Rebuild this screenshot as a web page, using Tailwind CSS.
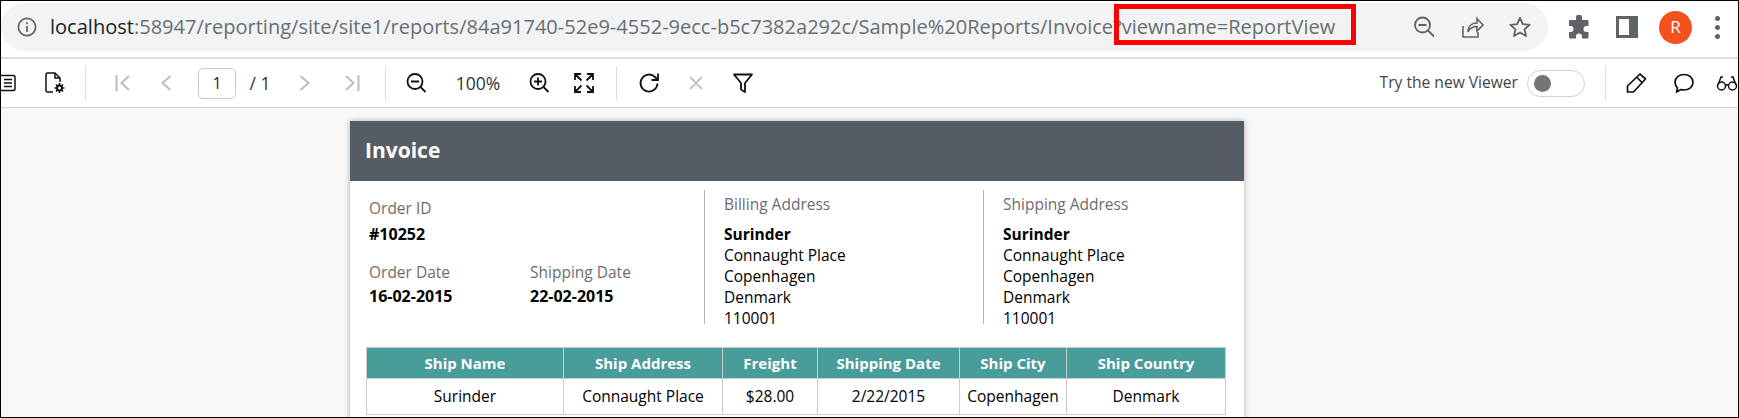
<!DOCTYPE html>
<html lang="en">
<head>
<meta charset="UTF-8" />
<title>Invoice - Report Viewer</title>
<script src="https://cdn.jsdelivr.net/npm/@tailwindcss/browser@4"></script>
</head>
<body class="bg-white">
<div class="relative w-[1739px] h-[418px] overflow-hidden border border-black bg-white font-['Open_Sans',sans-serif] flex flex-col box-border">

  <!-- browser bar -->
  <div class="flex items-center pt-[2px] pb-[6px] shrink-0 border-b-2 border-[#dadcdf] box-content h-[48px]">
    <div class="flex items-center w-[1547px] h-[48px] bg-[#f1f3f4] rounded-[24px] shrink-0">
      <svg class="ml-[15px] shrink-0" width="22" height="22" viewBox="0 0 22 22" fill="none" stroke="#5f6368" stroke-width="1.7"><circle cx="11" cy="11" r="8.6"/><path d="M11 10v6M11 6.2v2"/></svg>
      <div class="ml-[12px] w-[1330px] text-[20.05px] text-[#6a6e72] whitespace-nowrap overflow-hidden"><span class="text-[#202124]">localhost</span>:58947/reporting/site/site1/reports/84a91740-52e9-4552-9ecc-b5c7382a292c/Sample%20Reports/Invoice?viewname=ReportView</div>
      <svg class="ml-[32px] shrink-0" width="24" height="24" viewBox="0 0 24 24" fill="none" stroke="#5f6368" stroke-width="1.8"><circle cx="10.5" cy="10" r="7.5"/><path d="M6.5 10h8M16 15.5l6 6"/></svg>
      <svg class="ml-[24px] shrink-0" width="24" height="24" viewBox="0 0 24 24" fill="none" stroke="#5f6368" stroke-width="1.6"><path d="M3 11v11h15v-5"/><path d="M8 17c0-6 4-9 9-9V3.5l6 6.5-6 6v-4.500c-4 0-7 1.500-9 5.500z"/></svg>
      <svg class="ml-[24px] shrink-0" width="24" height="24" viewBox="0 0 24 24" fill="none" stroke="#5f6368" stroke-width="1.8"><path d="M12 2.800l2.800 6.300 6.800.7-5.100 4.500 1.500 6.700-6-3.500-6 3.500 1.500-6.700-5.100-4.500 6.800-.7z" stroke-linejoin="round"/></svg>
    </div>
    <svg class="ml-[19px] shrink-0" width="24" height="24" viewBox="0 0 24 24" fill="#5f6368"><path d="M9 2.500a3 3 0 0 1 6 0V5h5.500a1 1 0 0 1 1 1v5h-2a3 3 0 0 0 0 6h2v5.500a1 1 0 0 1-1 1H15v-2a3 3 0 0 0-6 0v2H3a1 1 0 0 1-1-1V17h1.500a3 3 0 0 0 0-6H2V6a1 1 0 0 1 1-1h6z"/></svg>
    <svg class="ml-[25px] shrink-0" width="22" height="22" viewBox="0 0 22 22" fill="#5f6368"><path fill-rule="evenodd" d="M0 0h22v22H0zM3 3v16h10V3z"/></svg>
    <div class="ml-[21px] w-[33px] h-[33px] shrink-0 rounded-full bg-[#f4511e] flex items-center justify-center text-[17px] text-white">R</div>
    <div class="ml-[23px] flex flex-col gap-[4px] shrink-0">
      <span class="w-[5px] h-[5px] rounded-full bg-[#5f6368]"></span>
      <span class="w-[5px] h-[5px] rounded-full bg-[#5f6368]"></span>
      <span class="w-[5px] h-[5px] rounded-full bg-[#5f6368]"></span>
    </div>
  </div>

  <!-- viewer toolbar -->
  <div class="flex items-center h-[48px] shrink-0 border-b border-[#cfcfcf] box-content text-[#1f1f1f]">
    <div class="w-[31px] shrink-0 overflow-hidden">
      <svg class="-ml-[4px]" width="20" height="20" viewBox="0 0 20 20" fill="none" stroke="#111" stroke-width="1.500"><rect x="3" y="2.500" width="15" height="15" rx="1.500"/><path d="M7 6.500h8M7 10h8M7 13.500h8"/></svg>
    </div>
    <div class="w-[46px] shrink-0 flex justify-center">
      <svg width="22" height="24" viewBox="0 0 22 24" fill="none" stroke="#111" stroke-width="1.500"><path d="M9 21H3.500a1.500 1.500 0 0 1-1.500-1.500v-16A1.500 1.500 0 0 1 3.500 2H11l5 5v4"/><path d="M11 2v5h5"/><circle cx="15.500" cy="17" r="2.500" stroke-width="2"/><path d="M15.500 12v2M15.500 20v2M10.500 17h2M18.500 17h2M12 13.500l1.500 1.500M17.500 19l1.500 1.500M19 13.500L17.500 15M13.500 19L12 20.500" stroke-width="1.600"/></svg>
    </div>
    <div class="ml-[7px] w-px h-[34px] bg-[#dedede] shrink-0"></div>

    <div class="ml-[14px] w-[46px] shrink-0 flex justify-center">
      <svg width="18" height="20" viewBox="0 0 18 20" fill="none" stroke="#bdbdbd" stroke-width="2"><path d="M2.500 2v16M15 3L7.500 10 15 17"/></svg>
    </div>
    <div class="w-[40px] shrink-0 flex justify-center">
      <svg width="14" height="20" viewBox="0 0 14 20" fill="none" stroke="#bdbdbd" stroke-width="2"><path d="M11.500 3L3.500 10l8 7"/></svg>
    </div>
    <div class="ml-[12px] w-[38px] h-[31px] shrink-0 border border-[#c9c9c9] rounded-[5px] flex items-center justify-center text-[16px]">1</div>
    <div class="w-[48px] shrink-0 text-center text-[17.500px] text-[#333]">/ 1</div>
    <div class="w-[42px] shrink-0 flex justify-center">
      <svg width="14" height="20" viewBox="0 0 14 20" fill="none" stroke="#bdbdbd" stroke-width="2"><path d="M2.500 3l8 7-8 7"/></svg>
    </div>
    <div class="w-[52px] shrink-0 flex justify-center">
      <svg width="18" height="20" viewBox="0 0 18 20" fill="none" stroke="#bdbdbd" stroke-width="2"><path d="M15.500 2v16M3 3l7.500 7L3 17"/></svg>
    </div>
    <div class="ml-[7px] w-px h-[34px] bg-[#dedede] shrink-0"></div>

    <div class="w-[60px] shrink-0 flex justify-center">
      <svg width="22" height="22" viewBox="0 0 22 22" fill="none" stroke="#111" stroke-width="1.800"><circle cx="10" cy="9.500" r="7.500"/><path d="M6 9.500h8M15.500 15l5 5"/></svg>
    </div>
    <div class="w-[64px] shrink-0 text-center text-[17.500px] text-[#333]">100%</div>
    <div class="w-[58px] shrink-0 flex justify-center">
      <svg width="22" height="22" viewBox="0 0 22 22" fill="none" stroke="#111" stroke-width="1.800"><circle cx="10" cy="9.500" r="7.500"/><path d="M6 9.500h8M10 5.500v8M15.500 15l5 5"/></svg>
    </div>
    <div class="w-[32px] shrink-0 flex justify-center">
      <svg width="22" height="22" viewBox="0 0 22 22" fill="none" stroke="#111" stroke-width="1.800"><path d="M2 8V2h6M2 2l6.500 6.500M14 2h6v6M20 2l-6.500 6.500M2 14v6h6M2 20l6.500-6.500M20 14v6h-6M20 20l-6.500-6.500"/></svg>
    </div>
    <div class="ml-[16px] w-px h-[34px] bg-[#dedede] shrink-0"></div>

    <div class="w-[64px] shrink-0 flex justify-center">
      <svg width="24" height="24" viewBox="0 0 24 24" fill="none" stroke="#111" stroke-width="1.800"><path d="M20.500 12.500a8.500 8.500 0 1 1-2.500-6.500l2.500 2.500"/><path d="M21 2.500v6.500h-6.500"/></svg>
    </div>
    <div class="w-[30px] shrink-0 flex justify-center">
      <svg width="18" height="18" viewBox="0 0 18 18" fill="none" stroke="#c4c4c4" stroke-width="2"><path d="M3 3l12 12M15 3L3 15"/></svg>
    </div>
    <div class="w-[64px] shrink-0 flex justify-center">
      <svg width="22" height="22" viewBox="0 0 22 22" fill="none" stroke="#111" stroke-width="1.800" stroke-linejoin="round"><path d="M2 2.500h18l-7 8.500v9l-4-2.500V11z"/></svg>
    </div>

    <div class="ml-auto shrink-0 text-[15.600px] text-[#444] whitespace-nowrap">Try the new Viewer</div>
    <div class="ml-[9px] w-[58px] h-[27px] shrink-0 rounded-full border border-[#cfcfcf] flex items-center pl-[6px]">
      <span class="w-[17px] h-[17px] rounded-full bg-[#757575]"></span>
    </div>
    <div class="ml-[20px] w-px h-[34px] bg-[#dedede] shrink-0"></div>
    <div class="w-[60px] shrink-0 flex justify-center">
      <svg width="22" height="22" viewBox="0 0 22 22" fill="none" stroke="#111" stroke-width="1.700" stroke-linejoin="round"><path d="M15 2l5.500 5-12 13H2.500v-6z"/><path d="M12 5.500l5.500 5.500"/></svg>
    </div>
    <div class="w-[36px] shrink-0 flex justify-center">
      <svg class="shrink-0" width="22" height="22" viewBox="0 0 22 22" fill="none" stroke="#111" stroke-width="1.700" stroke-linejoin="round"><path d="M11 2.500c5 0 9 3.300 9 7.800s-4 7.700-9 7.700c-1 0-2-.1-3-.5L3.500 20l1-4C3 14.500 2 12.500 2 10.300 2 5.800 6 2.500 11 2.500z"/></svg>
    </div>
    <div class="w-[36px] shrink-0 overflow-hidden">
      <svg class="ml-[14px]" width="22" height="20" viewBox="0 0 22 20" fill="none" stroke="#111" stroke-width="1.500"><circle cx="5.500" cy="13" r="4"/><circle cx="16.500" cy="13" r="4"/><path d="M9.500 12.500c1-1 2-1 3 0M2 12l3-8h2M20 12l-3-8h-2"/></svg>
    </div>
  </div>

  <!-- report page -->
  <div class="flex-1 min-h-0 bg-[#f8f8f8] overflow-hidden pt-[13px] pl-[349px]">
    <div class="w-[894px] h-[320px] bg-white shadow-[0_0_6px_rgba(0,0,0,0.3)]">
      <div class="h-[60px] bg-[#555c63] flex items-center pl-[15px] text-[21px] font-bold text-white">Invoice</div>

      <div class="flex h-[134px] mt-[9px]">
        <div class="w-[355px] pl-[19px] pt-[8px] shrink-0 border-r border-[#b5b5b5] text-[15.500px] leading-[20px]">
          <div class="text-[#6d6d6d]">Order ID</div>
          <div class="mt-[6px] font-bold text-black text-[16px]">#10252</div>
          <div class="flex mt-[18px]">
            <div class="w-[161px]">
              <div class="text-[#6d6d6d]">Order Date</div>
              <div class="mt-[4px] font-bold text-black text-[16px]">16-02-2015</div>
            </div>
            <div>
              <div class="text-[#6d6d6d]">Shipping Date</div>
              <div class="mt-[4px] font-bold text-black text-[16px]">22-02-2015</div>
            </div>
          </div>
        </div>
        <div class="w-[279px] pl-[19px] pt-[4px] shrink-0 border-r border-[#b5b5b5] text-[15.500px] leading-[21px] text-black">
          <div class="text-[#6d6d6d] mb-[9px]">Billing Address</div>
          <div class="font-bold">Surinder</div>
          <div>Connaught Place</div>
          <div>Copenhagen</div>
          <div>Denmark</div>
          <div>110001</div>
        </div>
        <div class="pl-[19px] pt-[4px] text-[15.500px] leading-[21px] text-black">
          <div class="text-[#6d6d6d] mb-[9px]">Shipping Address</div>
          <div class="font-bold">Surinder</div>
          <div>Connaught Place</div>
          <div>Copenhagen</div>
          <div>Denmark</div>
          <div>110001</div>
        </div>
      </div>

      <table class="ml-[16px] mt-[23px] w-[859px] table-fixed border-collapse text-center text-[15.500px]">
        <colgroup>
          <col class="w-[197px]" /><col class="w-[159px]" /><col class="w-[95px]" /><col class="w-[142px]" /><col class="w-[107px]" /><col class="w-[159px]" />
        </colgroup>
        <thead>
          <tr class="h-[31px] bg-[#489c9a] text-white font-bold text-[15px]">
            <th class="border border-[#cccccc] p-0">Ship Name</th>
            <th class="border border-[#cccccc] p-0">Ship Address</th>
            <th class="border border-[#cccccc] p-0">Freight</th>
            <th class="border border-[#cccccc] p-0">Shipping Date</th>
            <th class="border border-[#cccccc] p-0">Ship City</th>
            <th class="border border-[#cccccc] p-0">Ship Country</th>
          </tr>
        </thead>
        <tbody>
          <tr class="h-[36px] text-black">
            <td class="border border-[#cccccc] p-0">Surinder</td>
            <td class="border border-[#cccccc] p-0">Connaught Place</td>
            <td class="border border-[#cccccc] p-0">$28.00</td>
            <td class="border border-[#cccccc] p-0">2/22/2015</td>
            <td class="border border-[#cccccc] p-0">Copenhagen</td>
            <td class="border border-[#cccccc] p-0">Denmark</td>
          </tr>
        </tbody>
      </table>
    </div>
  </div>

  <!-- red annotation box over the url -->
  <div class="absolute left-[1113px] top-[3px] w-[242px] h-[41px] border-[5px] border-[#ff0000]"></div>
</div>
</body>
</html>
